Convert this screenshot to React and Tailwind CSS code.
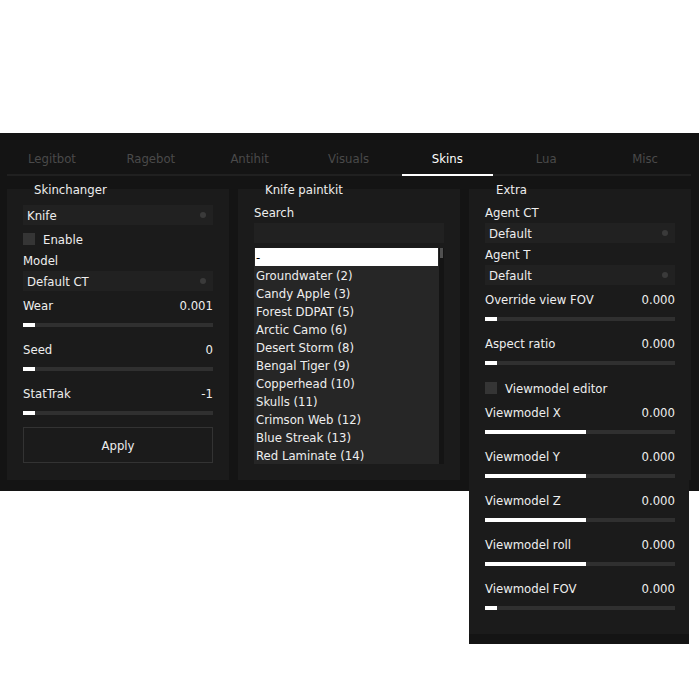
import { useId, useState } from "react";

const TABS = ["Legitbot", "Ragebot", "Antihit", "Visuals", "Skins", "Lua", "Misc"];

const PAINTKITS = [
  "-",
  "Groundwater (2)",
  "Candy Apple (3)",
  "Forest DDPAT (5)",
  "Arctic Camo (6)",
  "Desert Storm (8)",
  "Bengal Tiger (9)",
  "Copperhead (10)",
  "Skulls (11)",
  "Crimson Web (12)",
  "Blue Streak (13)",
  "Red Laminate (14)",
];

function Dropdown({ label, name, options, className = "" }) {
  const id = useId();
  return (
    <div className={`flex flex-col gap-px ${className}`}>
      {label && <label htmlFor={id}>{label}</label>}
      <div className="relative flex">
        <select
          id={id}
          aria-label={label ? undefined : name}
          className="h-5 w-full appearance-none bg-[#212121] pt-0.5 pl-1 leading-[18px] outline-none"
        >
          {options.map((option) => (
            <option key={option}>{option}</option>
          ))}
        </select>
        <span className="pointer-events-none absolute top-[7px] right-[7px] size-1.5 rounded-full bg-[#3a3a3a]" />
      </div>
    </div>
  );
}

function Checkbox({ label, className = "" }) {
  return (
    <label className={`flex h-4 items-start gap-2 ${className}`}>
      <input type="checkbox" className="mt-0.5 size-3 appearance-none bg-[#353535] checked:bg-white" />
      {label}
    </label>
  );
}

function Slider({ label, min, max, initial, digits = 0, className = "" }) {
  const id = useId();
  const [value, setValue] = useState(initial);
  const ratio = (value - min) / (max - min);
  const fill = `calc(12px + (100% - 12px) * ${ratio})`;
  return (
    <div className={`flex flex-col gap-2 ${className}`}>
      <div className="flex justify-between">
        <label htmlFor={id}>{label}</label>
        <output htmlFor={id}>{value.toFixed(digits)}</output>
      </div>
      <input
        id={id}
        type="range"
        min={min}
        max={max}
        step={digits ? 0.001 : 1}
        value={value}
        onChange={(e) => setValue(Number(e.target.value))}
        className="block h-1 w-full appearance-none bg-[#303030] outline-none [&::-webkit-slider-thumb]:size-3 [&::-webkit-slider-thumb]:appearance-none [&::-webkit-slider-thumb]:opacity-0"
        style={{ backgroundImage: `linear-gradient(to right, #fff ${fill}, #303030 ${fill})` }}
      />
    </div>
  );
}

function PanelTitle({ children }) {
  return <h2 className="-mt-2 pl-[11px]">{children}</h2>;
}

function Tabs() {
  const [active, setActive] = useState("Skins");
  return (
    <nav className="relative grid grid-cols-7 gap-2 before:absolute before:inset-x-0 before:bottom-0 before:h-0.5 before:bg-[#202020]">
      {TABS.map((tab) => (
        <button
          key={tab}
          type="button"
          onClick={() => setActive(tab)}
          className={
            tab === active
              ? "relative h-[43px] border-b-2 border-white pt-2.5 pr-px text-white"
              : "relative h-[43px] border-b-2 border-transparent pt-2.5 pr-px text-[#4a4a4a]"
          }
        >
          {tab}
        </button>
      ))}
    </nav>
  );
}

function SkinchangerPanel() {
  return (
    <section className="flex flex-col bg-[#1b1b1b] px-4 pb-[17px]">
      <PanelTitle>Skinchanger</PanelTitle>
      <Dropdown name="Item" options={["Knife", "Glove"]} className="mt-1.5" />
      <Checkbox label="Enable" className="mt-1.5" />
      <Dropdown label="Model" options={["Default CT", "Default T"]} className="mt-[5px]" />
      <Slider label="Wear" min={0.001} max={1} initial={0.001} digits={3} className="mt-1.5" />
      <Slider label="Seed" min={0} max={1000} initial={0} className="mt-3.5" />
      <Slider label="StatTrak" min={-1} max={1000} initial={-1} className="mt-3.5" />
      <button type="button" className="mt-3 h-9 border border-[#333333] pt-0.5">
        Apply
      </button>
    </section>
  );
}

function PaintkitPanel() {
  const [selected, setSelected] = useState("-");
  return (
    <section className="flex flex-col bg-[#1b1b1b] px-4 pb-4">
      <PanelTitle>Knife paintkit</PanelTitle>
      <label htmlFor="search" className="mt-[5px]">
        Search
      </label>
      <input id="search" type="text" className="mt-px h-5 bg-[#212121] px-1 outline-none" />
      <div className="mt-[5px] flex">
        <ul role="listbox" aria-label="Knife paintkit" className="flex-1 bg-[#262626] px-px">
          {PAINTKITS.map((kit) => (
            <li
              key={kit}
              role="option"
              aria-selected={kit === selected}
              onClick={() => setSelected(kit)}
              className={
                kit === selected
                  ? "h-[18px] bg-white pt-px pl-px text-black"
                  : "h-[18px] pt-px pl-px"
              }
            >
              {kit}
            </li>
          ))}
        </ul>
        <div className="w-[5px] bg-[#141414] px-px">
          <div className="h-2.5 bg-[#505050]" />
        </div>
      </div>
    </section>
  );
}

function ExtraPanel() {
  return (
    <section className="relative bg-[#1b1b1b]">
      {/* The settings run past the bottom of the window, over whatever is below it */}
      <div className="absolute top-0 right-0.5 left-0 flex flex-col border-b-10 border-[#141414] bg-[#1b1b1b] pr-3.5 pb-6 pl-4">
        <PanelTitle>Extra</PanelTitle>
        <Dropdown label="Agent CT" options={["Default"]} className="mt-[5px]" />
        <Dropdown label="Agent T" options={["Default"]} className="mt-[3px]" />
        <Slider label="Override view FOV" min={0} max={60} initial={0} digits={3} className="mt-1.5" />
        <Slider label="Aspect ratio" min={0} max={3} initial={0} digits={3} className="mt-3.5" />
        <Checkbox label="Viewmodel editor" className="mt-[15px]" />
        <Slider label="Viewmodel X" min={-20} max={20} initial={0} digits={3} className="mt-2" />
        <Slider label="Viewmodel Y" min={-20} max={20} initial={0} digits={3} className="mt-3.5" />
        <Slider label="Viewmodel Z" min={-20} max={20} initial={0} digits={3} className="mt-3.5" />
        <Slider label="Viewmodel roll" min={-90} max={90} initial={0} digits={3} className="mt-3.5" />
        <Slider label="Viewmodel FOV" min={0} max={90} initial={0} digits={3} className="mt-3.5" />
      </div>
    </section>
  );
}

export default function App() {
  return (
    <main className="min-h-screen bg-white pt-[133px] font-['DejaVu_Sans_Condensed','DejaVu_Sans',sans-serif] text-[13px] leading-[18px] text-[#eeeeee]">
      <div className="max-w-[699px] bg-[#141414] pr-2 pb-[11px] pl-[7px]">
        <Tabs />
        <div className="mt-[13px] grid grid-cols-3 gap-[9px]">
          <SkinchangerPanel />
          <PaintkitPanel />
          <ExtraPanel />
        </div>
      </div>
    </main>
  );
}
